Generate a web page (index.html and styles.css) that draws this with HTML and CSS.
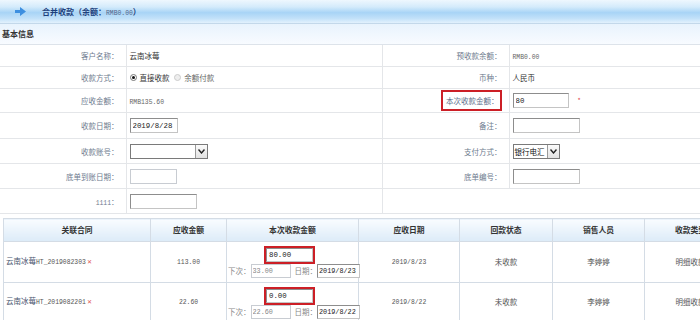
FILE: index.html
```html
<!DOCTYPE html>
<html lang="zh-CN">
<head>
    <meta charset="UTF-8">
    <title>合并收款</title>
    <link rel="stylesheet" href="styles.css">
</head>
<body>

    <div class="title-bar">
        <svg class="arrow" width="11" height="9" viewBox="0 0 11 9">
            <path d="M0 3h5V0l6 4.5L5 9V6H0z" fill="#3d8fe0"/>
        </svg>
        <span class="title">合并收款（余额：<span class="num">RMB0.00</span>）</span>
    </div>

    <div class="section-bar">基本信息</div>

    <table class="form">
        <colgroup>
            <col class="c-label"><col class="c-value"><col class="c-label2"><col>
        </colgroup>
        <tr class="r-text">
            <td class="label">客户名称：</td>
            <td class="value">云南冰莓</td>
            <td class="label">预收款余额：</td>
            <td class="value"><span class="num">RMB0.00</span></td>
        </tr>
        <tr class="r-text">
            <td class="label">收款方式：</td>
            <td class="value">
                <label class="radio"><span class="dot on"></span>直接收款</label>
                <label class="radio off"><span class="dot"></span>余额付款</label>
            </td>
            <td class="label">币种：</td>
            <td class="value">人民币</td>
        </tr>
        <tr class="r-text2">
            <td class="label">应收金额：</td>
            <td class="value"><span class="num">RMB135.60</span></td>
            <td class="label"><span class="mark">本次收款金额：</span></td>
            <td class="value"><input class="txt w55" value="80"><span class="star">*</span></td>
        </tr>
        <tr class="r-input">
            <td class="label">收款日期：</td>
            <td class="value"><input class="txt w48" value="2019/8/28"></td>
            <td class="label">备注：</td>
            <td class="value"><input class="txt w66"></td>
        </tr>
        <tr class="r-input">
            <td class="label">收款账号：</td>
            <td class="value">
                <span class="select w78"><span class="sel-text"></span><span class="sel-btn"><svg width="7" height="5" viewBox="0 0 7 5"><path d="M0.5 0.5L3.5 4L6.5 0.5" fill="none" stroke="#222" stroke-width="1.4"/></svg></span></span>
            </td>
            <td class="label">支付方式：</td>
            <td class="value">
                <span class="select w47"><span class="sel-text">银行电汇</span><span class="sel-btn"><svg width="7" height="5" viewBox="0 0 7 5"><path d="M0.5 0.5L3.5 4L6.5 0.5" fill="none" stroke="#222" stroke-width="1.4"/></svg></span></span>
            </td>
        </tr>
        <tr class="r-input">
            <td class="label">底单到账日期：</td>
            <td class="value"><input class="txt w46 dim"></td>
            <td class="label">底单编号：</td>
            <td class="value"><input class="txt w66"></td>
        </tr>
        <tr class="r-input">
            <td class="label"><span class="num">1111</span>：</td>
            <td class="value"><input class="txt w66"></td>
            <td class="blank"></td>
            <td class="blank"></td>
        </tr>
    </table>

    <table class="grid">
        <colgroup>
            <col style="width:147px"><col style="width:76px"><col style="width:132px"><col style="width:101px"><col style="width:93px"><col style="width:92px"><col style="width:92px">
        </colgroup>
        <tr class="head">
            <th>关联合同</th>
            <th>应收金额</th>
            <th>本次收款金额</th>
            <th>应收日期</th>
            <th>回款状态</th>
            <th>销售人员</th>
            <th>收款类型</th>
        </tr>
        <tr class="r1">
            <td class="left">云南冰莓<span class="num">HT_2019082303</span><span class="del">✕</span></td>
            <td><span class="num">113.00</span></td>
            <td class="amount">
                <div class="amt"><span class="mark"><input class="txt w46" value="80.00"></span></div>
                <div class="next">下次：<input class="txt w40 dim" value="33.00"><span class="gap">日期：</span><input class="txt w42" value="2019/8/23"></div>
            </td>
            <td><span class="num">2019/8/23</span></td>
            <td>未收款</td>
            <td>李婷婷</td>
            <td>明细收款</td>
        </tr>
        <tr class="r2">
            <td class="left">云南冰莓<span class="num">HT_2019082201</span><span class="del">✕</span></td>
            <td><span class="num">22.60</span></td>
            <td class="amount">
                <div class="amt"><span class="mark"><input class="txt w46" value="0.00"></span></div>
                <div class="next">下次：<input class="txt w40 dim" value="22.60"><span class="gap">日期：</span><input class="txt w42" value="2019/8/22"></div>
            </td>
            <td><span class="num">2019/8/22</span></td>
            <td>未收款</td>
            <td>李婷婷</td>
            <td>明细收款</td>
        </tr>
    </table>

</body>
</html>
```

FILE: styles.css
```css
body { margin: 0; width: 700px; height: 320px; overflow: hidden; background: #fff; font-family: "Noto Sans CJK SC", sans-serif; font-size: 7.5px; color: #444; }
.num { font-family: "Liberation Mono", monospace; font-size: 6.4px; }

.title-bar { height: 23px; display: flex; align-items: center; background: linear-gradient(#eef7fe 0%, #d4ebfb 30%, #a8d4f6 55%, #c2e1f9 80%, #e2f1fd 100%); border-bottom: 1px solid #c3d8ea; }
.arrow { margin-left: 15px; margin-right: 16px; }
.title { font-weight: bold; color: #1d3f7c; font-size: 8px; }
.title .num { font-weight: normal; color: #51658a; }

.section-bar { height: 20px; line-height: 20px; padding-left: 2px; font-weight: bold; color: #333; font-size: 8px; background: linear-gradient(#e8f3fd, #f8fbff); border-bottom: 1px solid #dde3ea; }

.form { width: 700px; border-collapse: collapse; table-layout: fixed; }
.form .c-label { width: 126px; }
.form .c-value { width: 256px; }
.form .c-label2 { width: 127px; }
.form td { border-bottom: 1px solid #e4e6e9; border-right: 1px solid #e4e6e9; padding: 0; }
.form td:last-child { border-right: none; }
.form .r-text td { height: 21px; }
.form .r-text2 td { height: 23px; }
.form .r-input td { height: 24px; }
.form tr:nth-child(4) td { height: 25px; }
.form .label { text-align: right; padding-right: 7px; color: #6d7a8e; }
.form .value { padding-left: 3px; color: #333; }
.form .value .num { color: #666; }
.form .blank { border-right: none; }

.mark { display: inline-block; border: 2px solid #cc1f26; }
.form .mark { padding: 3px 1px 3px 3px; color: #5c6f8c; }
.star { color: #e04848; margin-left: 9px; font-size: 7px; }

.radio { display: inline-flex; align-items: center; margin-right: 3px; color: #333; }
.radio.off { color: #666; }
.dot { width: 7px; height: 7px; border-radius: 50%; border: 1px solid #777; margin-right: 3px; background: #fff; box-sizing: border-box; position: relative; }
.dot.on::after { content: ""; position: absolute; left: 1px; top: 1px; width: 3px; height: 3px; border-radius: 50%; background: #111; }
.radio.off .dot { border-color: #ccc; background: #eee; }

.txt { height: 15px; margin: 0; box-sizing: border-box; border: 1px solid #8d8d8d; border-right-color: #c4c4c4; border-bottom-color: #c4c4c4; padding: 0 2px; font-family: "Liberation Mono", monospace; font-size: 7.4px; color: #222; vertical-align: middle; outline: none; background: #fff; }
.txt.dim { border-color: #c8ccd2; color: #888; }
.w40 { width: 40px; }
.w42 { width: 43px; }
.w46 { width: 47px; }
.w48 { width: 48px; }
.w55 { width: 56px; }
.w66 { width: 67px; }

.select { display: inline-flex; height: 15px; box-sizing: border-box; border: 1px solid #7a7a7a; vertical-align: middle; background: #fff; white-space: nowrap; overflow: hidden; }
.select.w78 { width: 78px; }
.select.w47 { width: 47px; }
.sel-text { flex: 1; font-size: 7.5px; line-height: 13px; padding-left: 1px; color: #111; overflow: hidden; }
.sel-btn { width: 11px; flex: none; display: flex; align-items: center; justify-content: center; border-left: 1px solid #9a9a9a; background: linear-gradient(#fbfbfb, #e2e2e2); }

.grid { margin: 4px 0 0 3px; border-collapse: collapse; table-layout: fixed; width: 733px; }
.grid th, .grid td { border: 1px solid #d4dce5; padding: 0; text-align: center; line-height: 12px; }
.grid th { height: 22px; font-weight: bold; color: #333; font-size: 7.8px; background: linear-gradient(#f9fcff, #dcebf8); }
.grid td { color: #555; }
.grid .r1 td { height: 36px; }
.grid .r2 td { height: 33px; }
.grid td.left { text-align: left; padding-left: 2px; color: #4a5670; }
.grid td.left .num { color: #555; }
.del { color: #e0524e; font-size: 6px; margin-left: 1px; }
.grid td.amount { text-align: left; vertical-align: top; padding-top: 4px; }
.amt { height: 18px; padding-left: 37px; display: flex; }
.grid .mark { padding: 0; display: flex; }
.grid .mark .txt { height: 14px; }
.next { height: 14px; display: flex; align-items: center; padding-left: 1px; color: #888; white-space: nowrap; }
.next .txt { height: 14px; font-size: 6.8px; padding: 0 1px; }
.next .gap { margin-left: 4px; }
```
